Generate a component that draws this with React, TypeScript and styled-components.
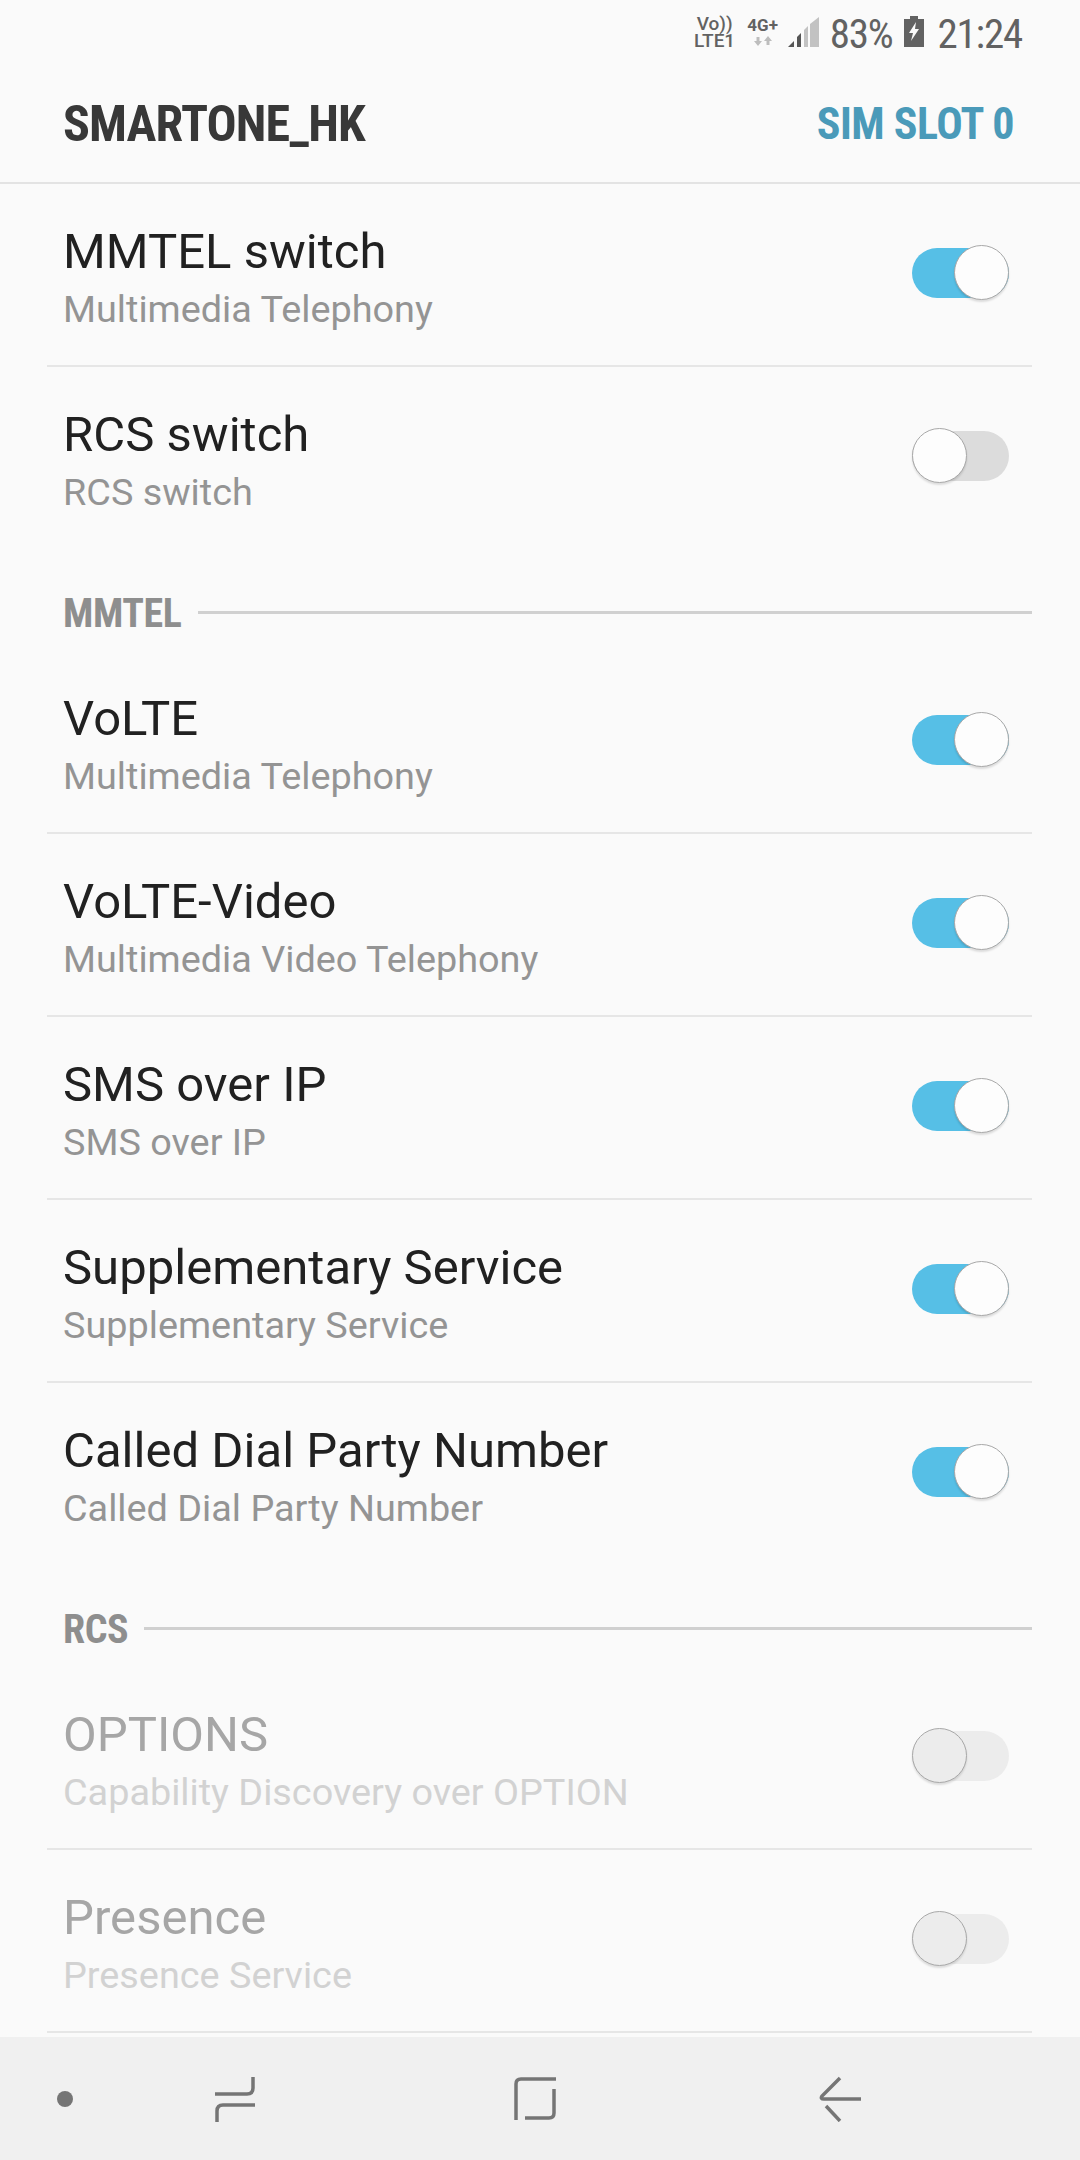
import React from "react";
import styled, { createGlobalStyle } from "styled-components";

const Global = createGlobalStyle`
  html, body { margin: 0; padding: 0; background: #fafafa; }
  body { font-family: Roboto, "Liberation Sans", sans-serif; }
  * { box-sizing: border-box; }
`;

const Screen = styled.div`
  width: 1080px;
  height: 2160px;
  display: flex;
  flex-direction: column;
  background: #fafafa;
  overflow: hidden;
`;

const StatusBar = styled.div`
  height: 60px;
  padding: 10px 58px 0 0;
  display: flex;
  justify-content: flex-end;
  align-items: flex-start;
  color: #626262;
`;

const NetLabel = styled.div`
  width: 44px;
  margin-top: 5px;
  margin-right: 9px;
  display: flex;
  flex-direction: column;
  align-items: center;
  font-weight: 500;
`;

const NetLine = styled.div`
  font-size: 19px;
  line-height: 17px;
  height: 17px;
  overflow: visible;
`;

const DataLabel = styled.div`
  width: 34px;
  margin-top: 7px;
  margin-right: 7px;
  display: flex;
  flex-direction: column;
  align-items: center;
  font-size: 17px;
  line-height: 17px;
  font-weight: 700;
  gap: 2px;
`;

const SignalIcon = styled.svg`
  width: 33px;
  height: 31px;
  margin-top: 7px;
  margin-right: 10px;
`;

const StatusText = styled.span`
  font-size: 41px;
  line-height: 48px;
  font-stretch: 75%;
  font-weight: 400;
  letter-spacing: -1.2px;
`;

const BatteryIcon = styled.svg`
  width: 22px;
  height: 31px;
  margin: 6px 12px 0 11px;
`;

const Header = styled.header`
  height: 124px;
  padding: 5px 66px 0 63px;
  display: flex;
  justify-content: space-between;
  align-items: center;
  border-bottom: 2px solid #e3e3e3;
`;

const Title = styled.h1`
  margin: 0;
  font-size: 50px;
  font-weight: 700;
  font-stretch: 75%;
  letter-spacing: -0.9px;
  color: #383838;
`;

const SimSlot = styled.span`
  font-size: 44px;
  font-weight: 700;
  font-stretch: 75%;
  letter-spacing: -0.5px;
  color: #4a9ab9;
`;

const List = styled.main`
  flex: 1;
  min-height: 0;
  overflow: hidden;
`;

const Row = styled.div<{ $divider: boolean }>`
  height: 183px;
  margin: 0 48px 0 47px;
  padding: 0 23px 4px 16px;
  display: flex;
  align-items: center;
  justify-content: space-between;
  border-bottom: 2px solid ${(p) => (p.$divider ? "#e6e6e6" : "transparent")};
`;

const RowText = styled.div`
  display: flex;
  flex-direction: column;
  padding-top: 9px;
  gap: 5px;
`;

const RowTitle = styled.div<{ $disabled: boolean }>`
  font-size: 49px;
  line-height: 58px;
  letter-spacing: 0.03px;
  color: ${(p) => (p.$disabled ? "#a6a6a6" : "#212121")};
`;

const RowSub = styled.div<{ $disabled: boolean }>`
  font-size: 37.8px;
  line-height: 46px;
  color: ${(p) => (p.$disabled ? "#d2d2d2" : "#949494")};
`;

const SwitchTrack = styled.div<{ $on: boolean; $disabled: boolean }>`
  position: relative;
  width: 97px;
  height: 50px;
  border-radius: 25px;
  background: ${(p) =>
    p.$disabled ? "#ececec" : p.$on ? "#56bfe6" : "#dcdcdc"};
`;

const SwitchKnob = styled.div<{ $on: boolean; $disabled: boolean }>`
  position: absolute;
  top: -3px;
  left: ${(p) => (p.$on ? "42px" : "0")};
  width: 55px;
  height: 55px;
  border-radius: 50%;
  background: ${(p) => (p.$disabled ? "#ececec" : "#fdfdfd")};
  border: 1.5px solid #a8a8a8;
  box-shadow: 0 2px 2px rgba(0, 0, 0, 0.12);
`;

const Section = styled.div`
  height: 101px;
  padding: 0 48px 16px 63px;
  display: flex;
  align-items: flex-end;
  gap: 16px;
`;

const SectionLabel = styled.span`
  font-size: 40px;
  line-height: 42px;
  font-weight: 700;
  font-stretch: 75%;
  letter-spacing: -0.4px;
  color: #8e8e8e;
`;

const SectionLine = styled.div`
  flex: 1;
  height: 3px;
  margin-bottom: 21px;
  background: #d0d0d0;
`;

const NavBar = styled.nav`
  height: 123px;
  flex: none;
  background: #f0f0f0;
  display: grid;
  grid-template-columns: 130px 210px 390px 220px;
  align-items: center;
  justify-items: center;
`;

const NavDot = styled.div`
  width: 16px;
  height: 16px;
  border-radius: 50%;
  background: #757575;
`;

const NavIcon = styled.svg`
  width: 42px;
  height: 46px;
  fill: none;
  stroke: #757575;
  stroke-width: 3.5;
`;

type Item = { title: string; sub: string; on: boolean; divider: boolean; disabled?: boolean };

const first: Item[] = [
  { title: "MMTEL switch", sub: "Multimedia Telephony", on: true, divider: true },
  { title: "RCS switch", sub: "RCS switch", on: false, divider: false },
];
const mmtel: Item[] = [
  { title: "VoLTE", sub: "Multimedia Telephony", on: true, divider: true },
  { title: "VoLTE-Video", sub: "Multimedia Video Telephony", on: true, divider: true },
  { title: "SMS over IP", sub: "SMS over IP", on: true, divider: true },
  { title: "Supplementary Service", sub: "Supplementary Service", on: true, divider: true },
  { title: "Called Dial Party Number", sub: "Called Dial Party Number", on: true, divider: false },
];
const rcs: Item[] = [
  { title: "OPTIONS", sub: "Capability Discovery over OPTION", on: false, divider: true, disabled: true },
  { title: "Presence", sub: "Presence Service", on: false, divider: true, disabled: true },
];

const Rows = ({ items }: { items: Item[] }) => (
  <>
    {items.map((it) => (
      <Row key={it.title} $divider={it.divider}>
        <RowText>
          <RowTitle $disabled={!!it.disabled}>{it.title}</RowTitle>
          <RowSub $disabled={!!it.disabled}>{it.sub}</RowSub>
        </RowText>
        <SwitchTrack $on={it.on} $disabled={!!it.disabled}>
          <SwitchKnob $on={it.on} $disabled={!!it.disabled} />
        </SwitchTrack>
      </Row>
    ))}
  </>
);

export default function App() {
  return (
    <Screen>
      <Global />
      <StatusBar>
        <NetLabel>
          <NetLine>Vo))</NetLine>
          <NetLine>LTE1</NetLine>
        </NetLabel>
        <DataLabel>
          <span>4G+</span>
          <svg width="20" height="10" viewBox="0 0 20 10">
            <path d="M5 10 L1 5 H3.5 V1 H6.5 V5 H9 Z" fill="#bdbdbd" />
            <path d="M15 0 L19 5 H16.5 V9 H13.5 V5 H11 Z" fill="#bdbdbd" />
          </svg>
        </DataLabel>
        <SignalIcon viewBox="0 0 33 31">
          <path d="M1 30 L7 24 V30 Z" fill="#555" />
          <path d="M10 30 V20 L14 16 V30 Z" fill="#555" />
          <path d="M17 30 V13 L21 9 V30 Z" fill="#c2c2c2" />
          <path d="M23 30 V7 L32 0 V30 Z" fill="#c2c2c2" />
        </SignalIcon>
        <StatusText>83%</StatusText>
        <BatteryIcon viewBox="0 0 22 31">
          <path d="M7 0 H15 V3 H21 V31 H1 V3 H7 Z" fill="#626262" />
          <path d="M13 6 L6 17 H10 L8 25 L16 13 H12 Z" fill="#fafafa" />
        </BatteryIcon>
        <StatusText>21:24</StatusText>
      </StatusBar>
      <Header>
        <Title>SMARTONE_HK</Title>
        <SimSlot>SIM SLOT 0</SimSlot>
      </Header>
      <List>
        <Rows items={first} />
        <Section>
          <SectionLabel>MMTEL</SectionLabel>
          <SectionLine />
        </Section>
        <Rows items={mmtel} />
        <Section>
          <SectionLabel>RCS</SectionLabel>
          <SectionLine />
        </Section>
        <Rows items={rcs} />
      </List>
      <NavBar>
        <NavDot />
        <NavIcon viewBox="0 0 42 46">
          <path d="M1 18 H33 Q39 18 39 12 V1" />
          <path d="M41 29 H9 Q3 29 3 35 V46" />
        </NavIcon>
        <NavIcon viewBox="0 0 42 46">
          <path d="M2 44 V8 Q2 3 7 3 H42" />
          <path d="M40 13 V37 Q40 42 35 42 H11" />
        </NavIcon>
        <NavIcon viewBox="0 0 42 46">
          <path d="M21 2 L3 20 Q1 23 5 23 H42" />
          <path d="M7 30 L21 45" />
        </NavIcon>
      </NavBar>
    </Screen>
  );
}
